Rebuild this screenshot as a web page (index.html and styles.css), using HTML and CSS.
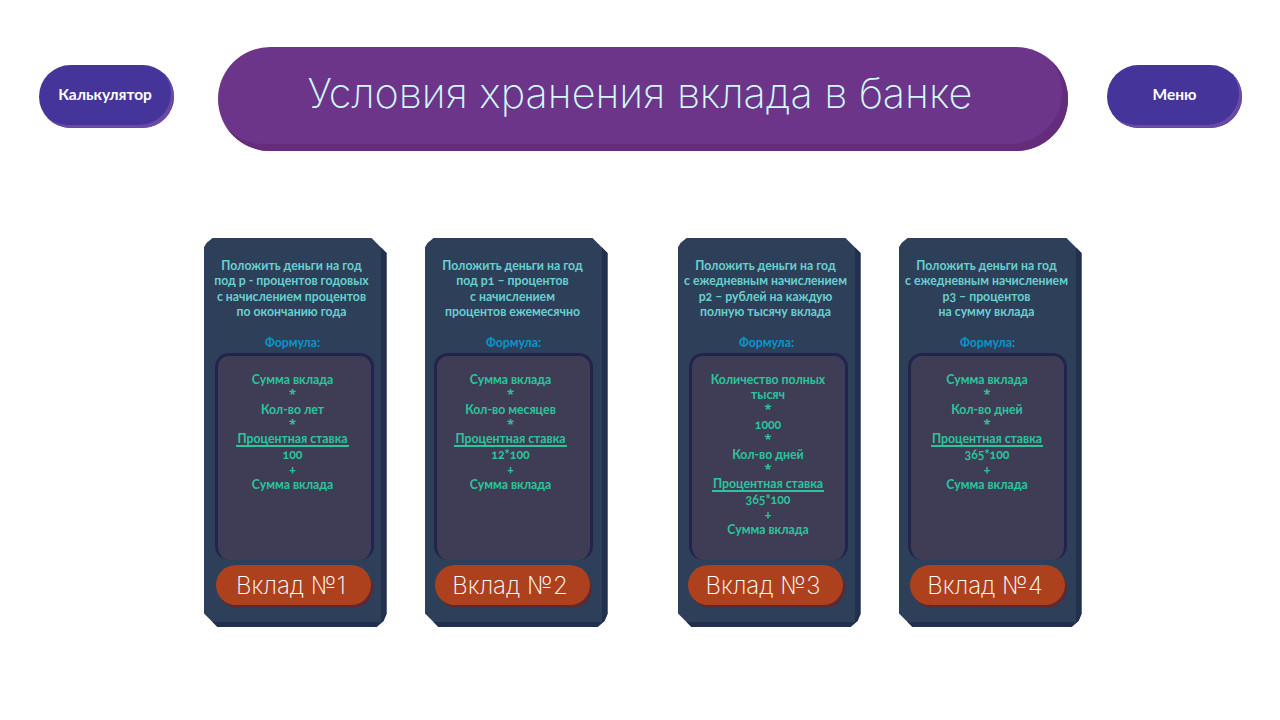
FILE: index.html
```html
<!DOCTYPE html>
<html>
<head>
  <title>Условия хранения вклада в банке</title>
  <link rel="stylesheet" href="styles.css">
</head>
<body>
  <header class="top">
    <a class="nav-btn">Калькулятор</a>
    <h1 class="title">Условия хранения вклада в банке</h1>
    <a class="nav-btn">Меню</a>
  </header>

  <main class="cards">
    <div class="pair">
      <section class="card card-1">
        <p class="desc">Положить деньги на год<br>под p - процентов годовых<br>с начислением процентов<br>по окончанию года</p>
        <p class="label">Формула:</p>
        <div class="formula">
          <div>Сумма вклада</div>
          <div class="op">*</div>
          <div>Кол-во лет</div>
          <div class="op">*</div>
          <div><span class="numerator">Процентная ставка</span></div>
          <div>100</div>
          <div>+</div>
          <div>Сумма вклада</div>
        </div>
        <button class="deposit">Вклад №1</button>
      </section>
      <section class="card card-2">
        <p class="desc">Положить деньги на год<br>под p1 – процентов<br>с начислением<br>процентов ежемесячно</p>
        <p class="label">Формула:</p>
        <div class="formula">
          <div>Сумма вклада</div>
          <div class="op">*</div>
          <div>Кол-во месяцев</div>
          <div class="op">*</div>
          <div><span class="numerator">Процентная ставка</span></div>
          <div>12*100</div>
          <div>+</div>
          <div>Сумма вклада</div>
        </div>
        <button class="deposit">Вклад №2</button>
      </section>
    </div>
    <div class="pair">
      <section class="card card-3">
        <p class="desc">Положить деньги на год<br>с ежедневным начислением<br>p2 – рублей на каждую<br>полную тысячу вклада</p>
        <p class="label">Формула:</p>
        <div class="formula">
          <div>Количество полных<br>тысяч</div>
          <div class="op">*</div>
          <div>1000</div>
          <div class="op">*</div>
          <div>Кол-во дней</div>
          <div class="op">*</div>
          <div><span class="numerator">Процентная ставка</span></div>
          <div>365*100</div>
          <div>+</div>
          <div>Сумма вклада</div>
        </div>
        <button class="deposit">Вклад №3</button>
      </section>
      <section class="card card-4">
        <p class="desc">Положить деньги на год<br>с ежедневным начислением<br>p3 – процентов<br>на сумму вклада</p>
        <p class="label">Формула:</p>
        <div class="formula">
          <div>Сумма вклада</div>
          <div class="op">*</div>
          <div>Кол-во дней</div>
          <div class="op">*</div>
          <div><span class="numerator">Процентная ставка</span></div>
          <div>365*100</div>
          <div>+</div>
          <div>Сумма вклада</div>
        </div>
        <button class="deposit">Вклад №4</button>
      </section>
    </div>
  </main>
</body>
</html>
```

FILE: styles.css
```css
body {
  margin: 0;
  background-color: #fff;
  font-family: Lato, "Open Sans", sans-serif;
}

.top {
  display: flex;
  align-items: flex-start;
  padding: 47px 38px 0 39px;
}

.nav-btn {
  display: flex;
  align-items: center;
  justify-content: center;
  box-sizing: border-box;
  width: 135px;
  height: 63px;
  margin-top: 18px;
  padding-bottom: 5px;
  border-radius: 32px;
  background-color: #45349a;
  box-shadow: inset -3px -3px 0 #6b4aa6;
  color: #fff;
  font-size: 15.5px;
  font-weight: 700;
}

.nav-btn:first-child {
  padding-right: 3px;
}

.title {
  box-sizing: border-box;
  width: 850px;
  height: 104px;
  margin: 0 39px 0 44px;
  padding-right: 6px;
  border-radius: 52px;
  background-color: #6c358a;
  box-shadow: inset -6px -7px 0 #652c7c;
  color: #d2fbfb;
  font-family: Inter, sans-serif;
  font-size: 41.4px;
  font-weight: 200;
  line-height: 92px;
  text-align: center;
}

.cards {
  display: flex;
  justify-content: center;
  gap: 70px;
  margin-top: 87px;
  padding-left: 5px;
}

.pair {
  display: flex;
  gap: 38px;
}

.card {
  display: flex;
  flex-direction: column;
  box-sizing: border-box;
  width: 183px;
  height: 389px;
  padding: 20px 0 0;
  background-color: #2e4059;
  box-shadow: inset -6px -5px 0 #22304f;
  clip-path: polygon(9px 0, 168px 0, 183px 15px, 183px 376px, 180px 383px, 173px 389px, 14px 389px, 0 375px, 0 10px, 3px 5px);
  font-size: 12.25px;
  font-weight: 700;
  line-height: 15.3px;
  text-align: center;
  font-variant-numeric: oldstyle-nums;
}

.desc {
  width: 176px;
  margin: 0;
  color: #68cfcf;
  white-space: nowrap;
}

.label {
  width: 178px;
  margin: 16px 0 3px;
  color: #0c94c9;
}

.formula {
  box-sizing: border-box;
  width: 159px;
  height: 207px;
  padding-top: 16px;
  border: 3px solid #23244d;
  border-bottom: 0;
  border-radius: 14px;
  background-color: #3f3d56;
  color: #2bc59b;
  line-height: 15px;
}

.op {
  font-family: "Open Sans", sans-serif;
  font-size: 13px;
}

.numerator {
  display: inline-block;
  padding: 0 1px;
  border-bottom: 2px solid #2bc59b;
  line-height: 13px;
  vertical-align: top;
}

.deposit {
  width: 155px;
  height: 40px;
  margin-top: 5px;
  padding: 0 4px 0 0;
  border: 0;
  border-radius: 20px;
  background-color: #ae411d;
  box-shadow: 2px 3px 0 #5c2a35;
  color: #fff;
  font-family: Inter, sans-serif;
  font-size: 24px;
  font-weight: 200;
}

/* the panels and buttons don't sit quite the same in each card */
.card-1 .formula { margin-left: 11px; padding-right: 3px; }
.card-1 .deposit { margin-left: 12px; }
.card-2 .formula { margin-left: 9px; padding-right: 5px; }
.card-2 .deposit { margin-left: 10px; }
.card-3 .formula { margin-left: 11px; }
.card-3 .deposit { margin-left: 10px; }
.card-4 .formula { margin-left: 9px; }
.card-4 .deposit { margin-left: 11px; }
```
